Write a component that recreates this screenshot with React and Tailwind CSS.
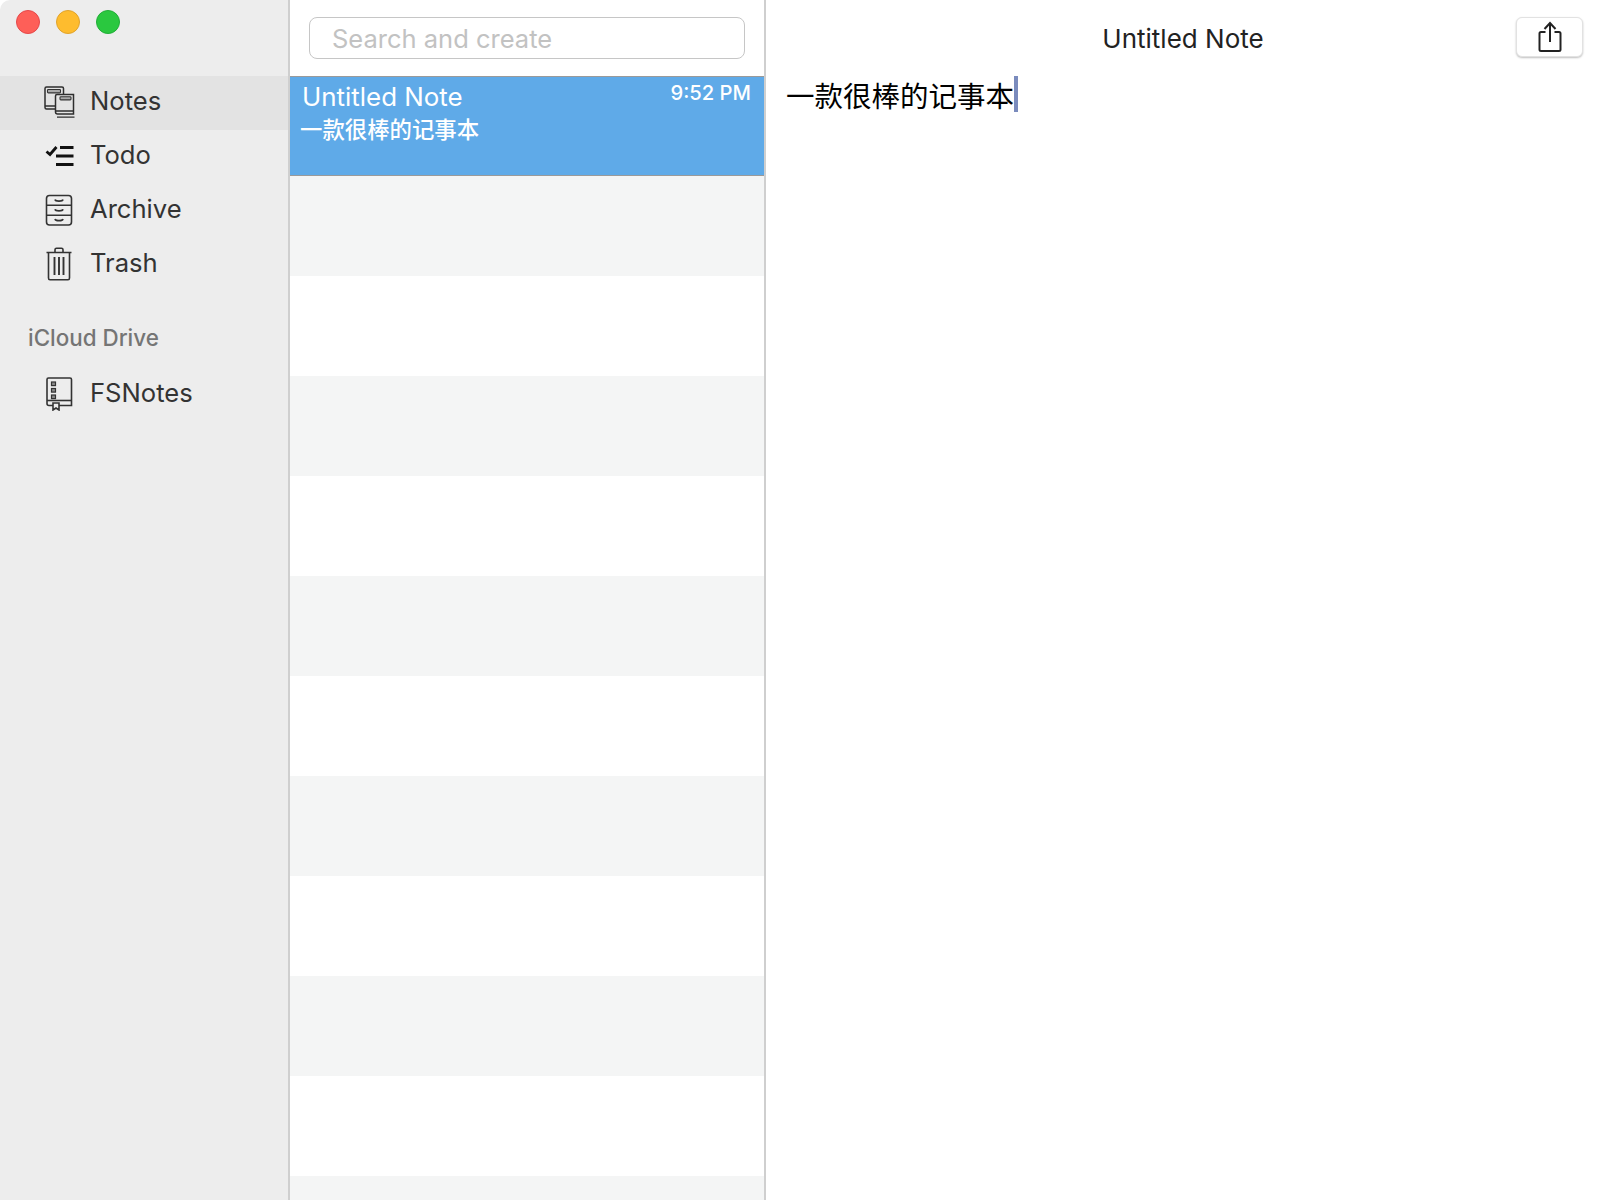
const sans = 'font-["Inter","Noto_Sans_CJK_SC",sans-serif]';

function NotesIcon() {
  return (
    <svg width="34" height="34" viewBox="0 0 34 34" fill="none" stroke="#2e2e2e" strokeWidth="1.5">
      <path d="M13 24H4.5C3.5 24 3 23.5 3 22.5V3.5C3 2.5 3.5 2 4.5 2H20C21 2 21.5 2.5 21.5 3.5V9" />
      <path d="M3 21H13" />
      <rect x="5.5" y="4.5" width="13" height="3.4" rx="0.8" fill="#aaa" stroke="#333" strokeWidth="1.1" />
      <path d="M15 9.5H31.5V29H15.5C14 29 13.5 28 13.5 27V11C13.5 10 14 9.5 15 9.5Z" fill="#e4e4e4" />
      <path d="M13.5 26H31.5" />
      <path d="M15 32.2H32.5" strokeWidth="1.3" />
      <rect x="18" y="11.7" width="11" height="3.2" rx="0.8" fill="#aaa" stroke="#333" strokeWidth="1.1" />
    </svg>
  );
}

function TodoIcon() {
  return (
    <svg width="30" height="24" viewBox="0 0 30 24" fill="none" stroke="#111">
      <path d="M2.5 7.5L6 10.5L12.5 3" strokeWidth="2.8" />
      <path d="M16 3.5H29.5" strokeWidth="3" />
      <path d="M12 12H29.5" strokeWidth="3" />
      <path d="M12 20.5H29.5" strokeWidth="3" />
    </svg>
  );
}

function ArchiveIcon() {
  return (
    <svg width="28" height="32" viewBox="0 0 28 32" fill="none" stroke="#333" strokeWidth="1.6">
      <rect x="1.5" y="1.5" width="25" height="29.5" rx="3" />
      <path d="M1.5 11.3H26.5M1.5 21.2H26.5" />
      <path d="M10 5.5C10.5 7.6 17.5 7.6 18 5.5M10 15.3C10.5 17.4 17.5 17.4 18 15.3M10 25C10.5 27.2 17.5 27.2 18 25" strokeWidth="1.7" />
    </svg>
  );
}

function TrashIcon() {
  return (
    <svg width="28" height="34" viewBox="0 0 28 34" fill="none" stroke="#333" strokeWidth="1.6">
      <path d="M1.5 5.5H26.5" />
      <path d="M3.5 5.5V31C3.5 32.2 4 32.7 5 32.7H23C24 32.7 24.5 32.2 24.5 31V5.5" />
      <path d="M10 5V2.8C10 1.8 10.5 1.3 11.5 1.3H16.5C17.5 1.3 18 1.8 18 2.8V5" />
      <path d="M9.5 10V28M14 10V28M18.5 10V28" strokeWidth="1.9" />
    </svg>
  );
}

function BookIcon() {
  return (
    <svg width="28" height="34" viewBox="0 0 28 34" fill="none" stroke="#333" strokeWidth="1.6">
      <path d="M2 2.5C2 1.5 2.5 1 3.5 1H25C26 1 26.5 1.5 26.5 2.5V28.5H4C2.5 28.5 2 27.8 2 26.5V2.5Z" />
      <path d="M2 23.5H26.5" />
      <rect x="6.5" y="5" width="4" height="3.6" fill="#888" strokeWidth="1.2" />
      <rect x="6.5" y="11.5" width="4" height="3.6" fill="#888" strokeWidth="1.2" />
      <rect x="6.5" y="18" width="4" height="3.6" fill="#888" strokeWidth="1.2" />
      <path d="M8 26H14V33L11 31L8 33V26Z" fill="#ededed" />
    </svg>
  );
}

function ShareIcon() {
  return (
    <svg width="24" height="32" viewBox="0 0 24 32" fill="none" stroke="#222" strokeWidth="2">
      <path d="M7.5 11H3C2 11 1.5 11.5 1.5 12.5V28.5C1.5 29.5 2 30 3 30H21C22 30 22.5 29.5 22.5 28.5V12.5C22.5 11.5 22 11 21 11H16.5" />
      <path d="M12 21V2" />
      <path d="M6.5 8L12 2L17.5 8" />
    </svg>
  );
}

function NavItem({ icon, label, active }) {
  return (
    <div className={`flex h-[54px] items-center ${active ? "bg-[#e3e3e3]" : ""}`}>
      <div className="flex w-[90px] shrink-0 justify-center pb-[2px] pl-[28px]">{icon}</div>
      <span className="pb-[5px] text-[25.6px] leading-none text-[#333]">{label}</span>
    </div>
  );
}

const rows = [0, 1, 2, 3, 4, 5, 6, 7, 8, 9, 10];

export default function App() {
  return (
    <div className={`flex h-[1200px] w-[1600px] overflow-hidden rounded-t-[10px] bg-white ${sans}`}>
      <aside className="flex w-[290px] shrink-0 flex-col border-r-2 border-[#cfcfcf] bg-[#ededed]">
        <div className="flex h-[76px] gap-[16px] pl-[16px] pt-[10px]">
          <span className="h-[24px] w-[24px] rounded-full border border-[#e5484a] bg-[#fe5f58]" />
          <span className="h-[24px] w-[24px] rounded-full border border-[#e0a32c] bg-[#febc2e]" />
          <span className="h-[24px] w-[24px] rounded-full border border-[#22ad38] bg-[#2ac83f]" />
        </div>
        <NavItem active icon={<NotesIcon />} label="Notes" />
        <NavItem icon={<TodoIcon />} label="Todo" />
        <NavItem icon={<ArchiveIcon />} label="Archive" />
        <NavItem icon={<TrashIcon />} label="Trash" />
        <div className="mt-[30px] mb-[14px] pl-[28px] text-[22.4px] font-medium leading-[32px] text-[#757575]">iCloud Drive</div>
        <NavItem icon={<BookIcon />} label="FSNotes" />
      </aside>

      <section className="flex w-[476px] shrink-0 flex-col border-r-2 border-[#cfcfcf] bg-white">
        <div className="flex h-[76px] shrink-0 items-start px-[19px] pt-[17px]">
          <div className="flex h-[42px] w-full items-center rounded-[8px] border border-[#c6c6c6] pl-[22px] pt-[1px] text-[25.5px] leading-none text-[#c2c2c2]">
            Search and create
          </div>
        </div>
        <div className="relative h-[100px] shrink-0 border-y border-[#9a9a9a] bg-[#5faae8] pl-[12px] pr-[13px] text-white">
          <div className="flex items-start justify-between">
            <span className="pt-[4px] text-[25.9px] leading-[32px]">Untitled Note</span>
            <span className="pt-[3px] text-[20.2px] font-medium leading-[26px]">9:52 PM</span>
          </div>
          <div className="-ml-[2px] pt-[2px] text-[22.4px] font-medium leading-[30px]">一款很棒的记事本</div>
        </div>
        {rows.map((i) => (
          <div key={i} className={`h-[100px] shrink-0 ${i % 2 === 0 ? "bg-[#f4f5f5]" : "bg-white"}`} />
        ))}
      </section>

      <main className="flex min-w-0 flex-1 flex-col">
        <div className="relative flex h-[76px] shrink-0 items-start justify-center pt-[20px]">
          <span className="text-[26px] leading-[38px] text-[#222]">Untitled Note</span>
          <div className="absolute right-[17px] top-[17px] flex h-[40px] w-[67px] items-center justify-center rounded-[6px] border border-[#e2e2e2] bg-white shadow-[0_1px_2px_rgba(0,0,0,0.25)]">
            <ShareIcon />
          </div>
        </div>
        <div className="flex items-start pl-[20px]">
          <span className="pt-[3px] text-[28.5px] leading-[36px] text-black">一款很棒的记事本</span>
          <span className="h-[36px] w-[4px] bg-[#7a8bbd]" />
        </div>
      </main>
    </div>
  );
}
